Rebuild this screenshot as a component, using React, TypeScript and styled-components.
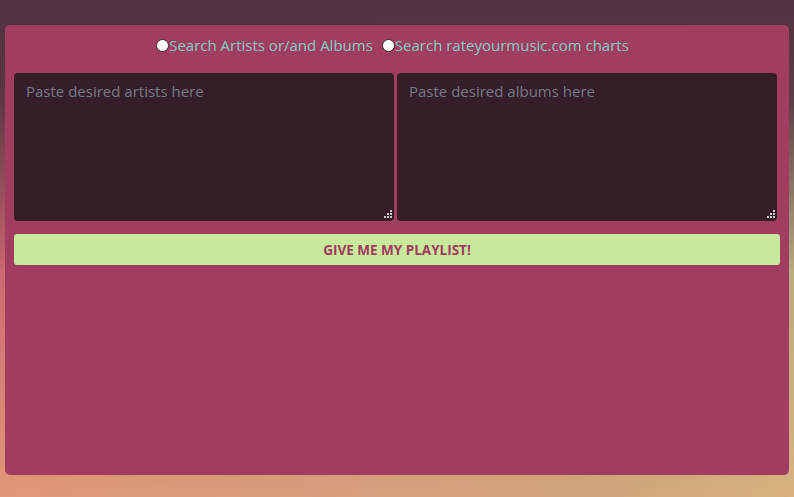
import { useState } from "react";
import styled, { createGlobalStyle } from "styled-components";

const GlobalStyle = createGlobalStyle`
  html, body {
    margin: 0;
    padding: 0;
    height: 100%;
  }
  body {
    font-family: "Open Sans", "Noto Sans", sans-serif;
    background:
      linear-gradient(to bottom, rgba(80, 50, 66, 1) 0%, rgba(80, 50, 66, 0.9) 20%, rgba(80, 50, 66, 0) 55%),
      linear-gradient(to right, #cc6670 0%, #b3787a 45%, #a4907c 80%, #b9ac82 100%),
      #9a4e66;
    overflow: hidden;
  }
  body::after {
    content: "";
    position: fixed;
    inset: 0;
    pointer-events: none;
    background: linear-gradient(to bottom, rgba(0, 0, 0, 0) 50%, rgba(235, 180, 125, 0.65) 100%);
    z-index: -1;
  }
  #root {
    height: 100vh;
  }
`;

export default function App() {
  const [mode, setMode] = useState<"search" | "charts" | "">("");
  const [artists, setArtists] = useState("");
  const [albums, setAlbums] = useState("");

  return (
    <>
      <GlobalStyle />
      <Page>
        <Panel>
          <ModeRow>
            <Option>
              <Radio
                type="radio"
                name="mode"
                checked={mode === "search"}
                onChange={() => setMode("search")}
              />
              Search Artists or/and Albums
            </Option>
            <Option>
              <Radio
                type="radio"
                name="mode"
                checked={mode === "charts"}
                onChange={() => setMode("charts")}
              />
              Search rateyourmusic.com charts
            </Option>
          </ModeRow>
          <Inputs>
            <Field>
              <Area
                placeholder="Paste desired artists here"
                value={artists}
                onChange={(e) => setArtists(e.target.value)}
              />
              <Grip />
            </Field>
            <Field>
              <Area
                placeholder="Paste desired albums here"
                value={albums}
                onChange={(e) => setAlbums(e.target.value)}
              />
              <Grip />
            </Field>
          </Inputs>
          <SubmitButton>Give me my playlist!</SubmitButton>
        </Panel>
      </Page>
    </>
  );
}

const Grip = () => (
  <GripIcon width="8" height="8" viewBox="0 0 8 8">
    <rect x="6" y="0" width="2" height="2" />
    <rect x="3" y="3" width="2" height="2" />
    <rect x="6" y="3" width="2" height="2" />
    <rect x="0" y="6" width="2" height="2" />
    <rect x="3" y="6" width="2" height="2" />
    <rect x="6" y="6" width="2" height="2" />
  </GripIcon>
);

const Page = styled.div`
  display: flex;
  flex-direction: column;
  height: 100%;
  padding: 25px 5px 22px;
  box-sizing: border-box;
`;

const Panel = styled.main`
  flex: 1;
  display: flex;
  flex-direction: column;
  background: #a03d60;
  border-radius: 5px;
  padding: 8px 9px;
`;

const ModeRow = styled.div`
  display: flex;
  justify-content: center;
  gap: 9px;
  height: 24px;
  align-items: center;
  margin-bottom: 16px;
  padding-right: 9px;
`;

const Option = styled.label`
  display: flex;
  align-items: center;
  color: #80cfc2;
  font-size: 15px;
  cursor: pointer;
`;

const Radio = styled.input`
  appearance: none;
  width: 13px;
  height: 13px;
  margin: 0;
  border-radius: 50%;
  background: #fbfdf9;
  border: 1px solid #3a2a30;
  box-sizing: border-box;

  &:checked {
    background: radial-gradient(circle, #3a2a30 35%, #fbfdf9 40%);
  }
`;

const Inputs = styled.div`
  display: grid;
  grid-template-columns: 1fr 1fr;
  gap: 3px;
  padding-right: 3px;
`;

const Field = styled.div`
  position: relative;
  display: flex;
`;

const Area = styled.textarea`
  flex: 1;
  height: 148px;
  box-sizing: border-box;
  resize: none;
  border: none;
  outline: none;
  border-radius: 4px;
  background: #361d2a;
  color: #c9c2c6;
  padding: 8px 12px;
  font-family: "Open Sans", "Noto Sans", sans-serif;
  font-size: 15px;

  &::placeholder {
    color: #737a85;
  }
`;

const GripIcon = styled.svg`
  position: absolute;
  right: 2px;
  bottom: 3px;
  fill: #c9c9cf;
  pointer-events: none;
`;

const SubmitButton = styled.button`
  margin-top: 13px;
  height: 31px;
  border: none;
  border-radius: 3px;
  background: #c8e89c;
  color: #9f3c5f;
  font-family: "Open Sans", "Noto Sans", sans-serif;
  font-weight: 700;
  font-size: 13.5px;
  text-transform: uppercase;
  cursor: pointer;
`;
